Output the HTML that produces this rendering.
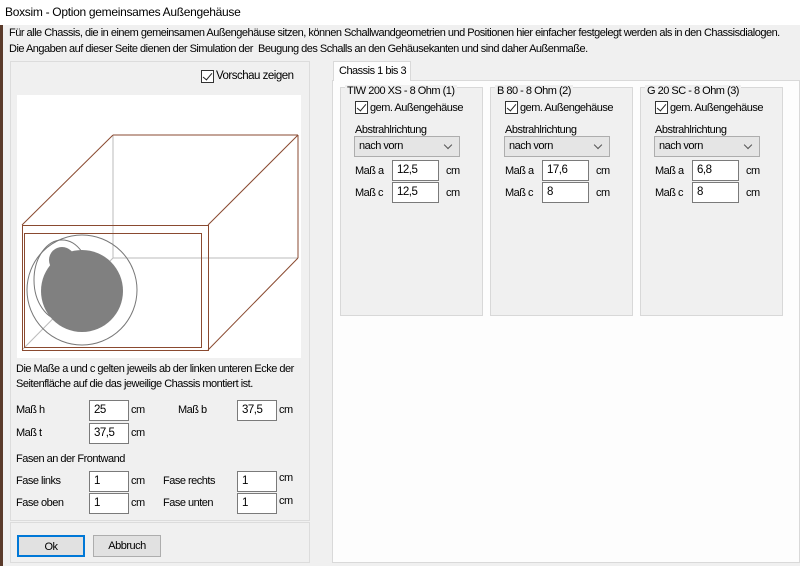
<!DOCTYPE html><html><head><meta charset="utf-8"><style>
*{box-sizing:border-box}body{margin:0;width:800px;height:566px;background:#f0f0f0;font-family:"Liberation Sans",sans-serif;font-size:11px;letter-spacing:-0.5px;color:#000;position:relative;overflow:hidden}
.a{position:absolute;white-space:nowrap}
.in{position:absolute;background:#fff;border:1px solid #7a7a7a;height:21px;padding:3px 0 0 4px;font-size:11.5px}
.cb{position:absolute;width:13px;height:13px;border:1px solid #333;background:#fff}
.cb:after{content:"";position:absolute;left:3px;top:0px;width:4px;height:8px;border:solid #222;border-width:0 1.5px 1.5px 0;transform:rotate(40deg)}
.grp{position:absolute;top:87px;width:143px;height:229px;background:#f0f0f0;border:1px solid #d8d8d8}
.sel{position:absolute;left:13px;top:48px;width:106px;height:21px;background:#e5e5e5;border:1px solid #adadad;padding:3px 4px;font-size:11px}
.sel:after{content:"";position:absolute;right:8px;top:5px;width:5px;height:5px;border:solid #555;border-width:0 1px 1px 0;transform:rotate(45deg)}
.btn{position:absolute;top:535px;height:22px;background:#e1e1e1;border:1px solid #adadad;text-align:center;padding-top:4px}
</style></head><body>
<div class="a" style="left:0;top:0;width:800px;height:25px;background:#fff"></div>
<div class="a" style="left:0;top:25px;width:3px;height:541px;background:#5a3a2a"></div>
<div class="a" style="left:5px;top:5px;font-size:12px;letter-spacing:-0.3px">Boxsim - Option gemeinsames Außengehäuse</div>
<div class="a" style="left:9px;top:27px">Für alle Chassis, die in einem gemeinsamen Außengehäuse sitzen, können Schallwandgeometrien und Positionen hier einfacher festgelegt werden als in den Chassisdialogen.</div>
<div class="a" style="left:9px;top:43px">Die Angaben auf dieser Seite dienen der Simulation der&nbsp; Beugung des Schalls an den Gehäusekanten und sind daher Außenmaße.</div>
<div class="a" style="left:10px;top:61px;width:300px;height:460px;border:1px solid #dcdcdc"></div>
<div class="a" style="left:10px;top:522px;width:300px;height:41px;border:1px solid #dcdcdc"></div>
<div class="cb" style="left:201px;top:70px"></div><div class="a" style="left:216px;top:70px;font-size:11.5px">Vorschau zeigen</div>
<svg class="a" style="left:17px;top:95px" width="284" height="263" viewBox="17 95 284 263">
<rect x="17" y="95" width="284" height="263" fill="#fff"/>
<g stroke="#bbb" fill="none"><line x1="113" y1="135" x2="113" y2="258"/><line x1="113" y1="258" x2="298" y2="258"/><line x1="22" y1="350" x2="113" y2="258"/></g>
<g stroke="#8a4a30" fill="none"><rect x="22.5" y="225.5" width="186" height="125"/><rect x="24.5" y="233.5" width="177" height="114"/><line x1="22" y1="225" x2="113" y2="135"/><line x1="113" y1="135" x2="298" y2="135"/><line x1="208" y1="225" x2="298" y2="135"/><line x1="298" y1="135" x2="298" y2="258"/><line x1="208" y1="350" x2="298" y2="258"/></g>
<g stroke="#777" fill="none"><circle cx="82" cy="290" r="55"/><ellipse cx="62" cy="280" rx="28" ry="40"/></g>
<g fill="#808080"><circle cx="82" cy="291" r="41"/><circle cx="62" cy="260" r="13"/></g>
</svg>
<div class="a" style="left:16px;top:362px;line-height:15px">Die Maße a und c gelten jeweils ab der linken unteren Ecke der<br>Seitenfläche auf die das jeweilige Chassis montiert ist.</div>
<div class="a" style="left:16px;top:404px">Maß h</div><div class="in" style="left:89px;top:400px;width:40px">25</div><div class="a" style="left:131px;top:404px">cm</div>
<div class="a" style="left:178px;top:404px">Maß b</div><div class="in" style="left:237px;top:400px;width:40px">37,5</div><div class="a" style="left:279px;top:404px">cm</div>
<div class="a" style="left:16px;top:427px">Maß t</div><div class="in" style="left:89px;top:423px;width:40px">37,5</div><div class="a" style="left:131px;top:427px">cm</div>
<div class="a" style="left:16px;top:453px">Fasen an der Frontwand</div>
<div class="a" style="left:16px;top:475px">Fase links</div><div class="in" style="left:89px;top:471px;width:40px">1</div><div class="a" style="left:131px;top:475px">cm</div>
<div class="a" style="left:163px;top:475px">Fase rechts</div><div class="in" style="left:237px;top:471px;width:40px">1</div><div class="a" style="left:279px;top:472px">cm</div>
<div class="a" style="left:16px;top:497px">Fase oben</div><div class="in" style="left:89px;top:493px;width:40px">1</div><div class="a" style="left:131px;top:497px">cm</div>
<div class="a" style="left:163px;top:497px">Fase unten</div><div class="in" style="left:237px;top:493px;width:40px">1</div><div class="a" style="left:279px;top:495px">cm</div>
<div class="btn" style="left:17px;width:68px;border:2px solid #0078d7">Ok</div>
<div class="btn" style="left:93px;width:68px">Abbruch</div>
<div class="a" style="left:332px;top:80px;width:468px;height:483px;background:#fdfdfd;border:1px solid #d9d9d9"></div>
<div class="a" style="left:333px;top:61px;width:78px;height:20px;background:#fdfdfd;border:1px solid #d9d9d9;border-bottom:none;padding:3px 0 0 5px">Chassis 1 bis 3</div>
<div class="grp" style="left:340px"><div class="a" style="left:4px;top:-3px;background:#f0f0f0;padding:0 2px">TIW 200 XS - 8 Ohm (1)</div><div class="cb" style="left:14px;top:13px"></div><div class="a" style="left:29px;top:14px">gem. Außengehäuse</div><div class="a" style="left:14px;top:36px">Abstrahlrichtung</div><div class="sel">nach vorn</div><div class="a" style="left:14px;top:77px">Maß a</div><div class="in" style="left:51px;top:72px;width:47px">12,5</div><div class="a" style="left:105px;top:77px">cm</div><div class="a" style="left:14px;top:99px">Maß c</div><div class="in" style="left:51px;top:94px;width:47px">12,5</div><div class="a" style="left:105px;top:99px">cm</div></div>
<div class="grp" style="left:490px"><div class="a" style="left:4px;top:-3px;background:#f0f0f0;padding:0 2px">B 80 - 8 Ohm (2)</div><div class="cb" style="left:14px;top:13px"></div><div class="a" style="left:29px;top:14px">gem. Außengehäuse</div><div class="a" style="left:14px;top:36px">Abstrahlrichtung</div><div class="sel">nach vorn</div><div class="a" style="left:14px;top:77px">Maß a</div><div class="in" style="left:51px;top:72px;width:47px">17,6</div><div class="a" style="left:105px;top:77px">cm</div><div class="a" style="left:14px;top:99px">Maß c</div><div class="in" style="left:51px;top:94px;width:47px">8</div><div class="a" style="left:105px;top:99px">cm</div></div>
<div class="grp" style="left:640px"><div class="a" style="left:4px;top:-3px;background:#f0f0f0;padding:0 2px">G 20 SC - 8 Ohm (3)</div><div class="cb" style="left:14px;top:13px"></div><div class="a" style="left:29px;top:14px">gem. Außengehäuse</div><div class="a" style="left:14px;top:36px">Abstrahlrichtung</div><div class="sel">nach vorn</div><div class="a" style="left:14px;top:77px">Maß a</div><div class="in" style="left:51px;top:72px;width:47px">6,8</div><div class="a" style="left:105px;top:77px">cm</div><div class="a" style="left:14px;top:99px">Maß c</div><div class="in" style="left:51px;top:94px;width:47px">8</div><div class="a" style="left:105px;top:99px">cm</div></div>
</body></html>
